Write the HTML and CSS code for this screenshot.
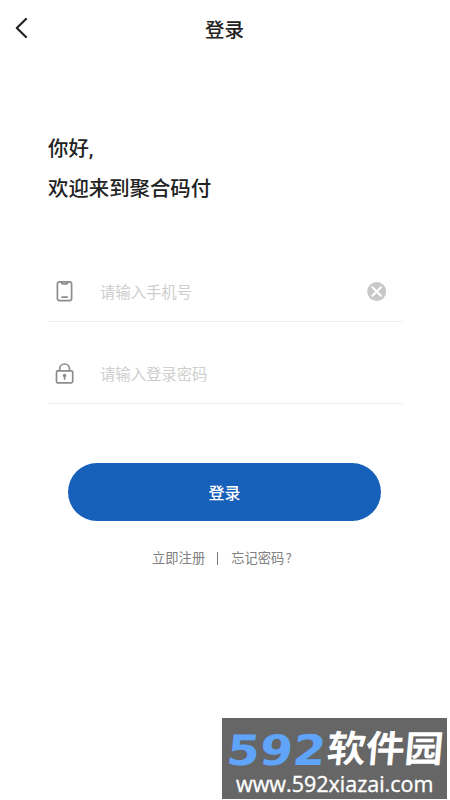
FILE: index.html
```html
<!DOCTYPE html>
<html lang="zh-CN">
<head>
<meta charset="utf-8">
<title>登录</title>
<link rel="stylesheet" href="styles.css">
</head>
<body>
<div class="screen">
  <header class="topbar">
    <svg class="back" viewBox="0 0 14 22" width="14" height="22"><path d="M12 2 2.8 11 12 20"/></svg>
    <h1 class="title">登录</h1>
  </header>
  <main class="content">
    <div class="greeting"><p>你好,</p><p>欢迎来到聚合码付</p></div>
    <form class="form">
      <div class="field">
        <svg class="icon" viewBox="0 0 20 24" width="20" height="24"><rect x="2.4" y="2.9" width="14.2" height="18.8" rx="2.2"/><path d="M6.3 3.4c.2 1.1.5 1.4 1.2 1.4h4.2c.7 0 1-.3 1.2-1.4M7 18.1h5.2"/></svg>
        <span class="placeholder">请输入手机号</span>
        <svg class="clear" viewBox="0 0 20 20" width="20" height="20"><circle cx="9.7" cy="10.5" r="9.5"/><path d="m5.4 6.2 8.6 8.6m0-8.6-8.6 8.6"/></svg>
      </div>
      <div class="field second">
        <svg class="icon" viewBox="0 0 20 24" width="20" height="24"><rect x="1.5" y="9.8" width="16.2" height="12" rx="1.3"/><path d="M4.7 9.7V7.9a4.9 4.9 0 0 1 9.8 0v1.8M9.6 14.7v3.4"/><circle class="key" cx="9.6" cy="14.6" r="1.8"/></svg>
        <span class="placeholder">请输入登录密码</span>
      </div>
      <button class="submit" type="button">登录</button>
    </form>
    <nav class="links"><span>立即注册</span><i class="bar"></i><span>忘记密码<span class="mark">?</span></span></nav>
  </main>
  <aside class="watermark">
    <div class="brand"><span class="digits">592</span><span class="name">软件园</span></div>
    <div class="url">www.592xiazai.com</div>
  </aside>
</div>
</body>
</html>
```
FILE: styles.css
```css
* { box-sizing: border-box; margin: 0; padding: 0; }
body { background: #fff; font-family: "Noto Sans CJK SC", sans-serif; color: #222; }
.screen { position: relative; width: 450px; height: 800px; overflow: hidden; }
svg { fill: none; stroke-linecap: round; stroke-linejoin: round; flex: none; }
.topbar { display: flex; align-items: center; height: 56px; padding-left: 14px; }
.back { stroke: #222; stroke-width: 2.2; }
.title { width: 393px; padding-top: 1px; text-align: center; font-size: 19.5px; line-height: 28px; font-weight: 500; }
.content { padding: 73px 47px 0 48px; }
.greeting { font-family: Roboto, "Noto Sans CJK SC", sans-serif; font-size: 20.4px; line-height: 40px; font-weight: 500; }
.form { padding-top: 52px; }
.field { display: flex; align-items: center; height: 61px; width: 355px; padding-left: 7px; border-bottom: 1px solid #ededed; }
.field.second { margin-top: 21px; }
.icon { stroke: #8d8d8d; stroke-width: 1.7; }
.key { fill: #8d8d8d; stroke: none; }
.placeholder { margin-left: 25px; font-size: 15.35px; line-height: 24px; color: #cecece; }
.clear { margin-left: auto; margin-right: 16px; fill: #c8c8c8; }
.clear path { stroke: #fff; stroke-width: 2; }
.submit { display: block; width: 313px; height: 58px; margin: 59px 0 0 20px; border: 0; border-radius: 29px; background: #1760b9; color: #fff; font: 500 16px/59px "Noto Sans CJK SC", sans-serif; }
.links { display: flex; align-items: center; margin: 27px 0 0 104px; font-size: 13.3px; line-height: 20px; color: #808080; }
.mark { margin-left: 1px; }
.bar { width: 1px; height: 13px; margin: 0 13px 0 12px; background: #777; }
.watermark { position: absolute; left: 222px; top: 718px; width: 225px; height: 81px; background: #666; color: #fff; overflow: hidden; }
.brand { display: flex; height: 51px; padding: 10px 0 0 4px; }
.digits { width: 100px; font: bold 42px/46px "DejaVu Sans", sans-serif; color: #60a4fa; transform: skewX(-6deg) scaleX(1.13); transform-origin: 0 80%; }
.name { font-size: 37px; line-height: 36px; font-weight: 700; transform: skewX(-5deg) scaleX(1.05); transform-origin: 0 80%; }
.url { padding-left: 14px; font: 500 21.5px/30px "Open Sans", sans-serif; -webkit-text-stroke: .35px #fff; }
```
